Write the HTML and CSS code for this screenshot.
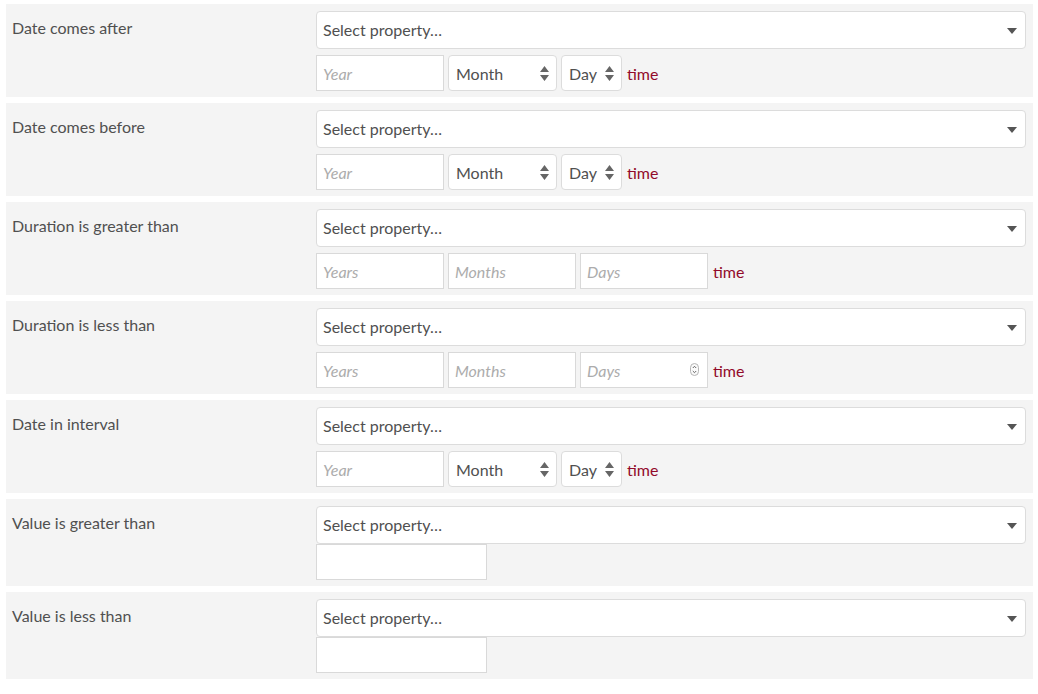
FILE: index.html
```html
<!DOCTYPE html>
<html>
<head>
<meta charset="utf-8">
<link rel="stylesheet" href="styles.css">
</head>
<body>
<div class="list">

  <div class="panel">
    <div class="label">Date comes after</div>
    <div class="fields">
      <div class="select"><span>Select property…</span><svg class="caret" width="10" height="6" viewBox="0 0 10 6"><path d="M0 0H10L5 6Z"/></svg></div>
      <div class="row">
        <input class="input w128" placeholder="Year">
        <div class="mini w109"><span>Month</span><svg class="updown" width="9" height="15" viewBox="0 0 9 15"><path d="M4.5 0L9 6H0Z M0 9H9L4.5 15Z"/></svg></div>
        <div class="mini w61"><span>Day</span><svg class="updown" width="9" height="15" viewBox="0 0 9 15"><path d="M4.5 0L9 6H0Z M0 9H9L4.5 15Z"/></svg></div>
        <span class="time">time</span>
      </div>
    </div>
  </div>

  <div class="panel">
    <div class="label">Date comes before</div>
    <div class="fields">
      <div class="select"><span>Select property…</span><svg class="caret" width="10" height="6" viewBox="0 0 10 6"><path d="M0 0H10L5 6Z"/></svg></div>
      <div class="row">
        <input class="input w128" placeholder="Year">
        <div class="mini w109"><span>Month</span><svg class="updown" width="9" height="15" viewBox="0 0 9 15"><path d="M4.5 0L9 6H0Z M0 9H9L4.5 15Z"/></svg></div>
        <div class="mini w61"><span>Day</span><svg class="updown" width="9" height="15" viewBox="0 0 9 15"><path d="M4.5 0L9 6H0Z M0 9H9L4.5 15Z"/></svg></div>
        <span class="time">time</span>
      </div>
    </div>
  </div>

  <div class="panel">
    <div class="label">Duration is greater than</div>
    <div class="fields">
      <div class="select"><span>Select property…</span><svg class="caret" width="10" height="6" viewBox="0 0 10 6"><path d="M0 0H10L5 6Z"/></svg></div>
      <div class="row">
        <input class="input w128" placeholder="Years">
        <input class="input w128" placeholder="Months">
        <input class="input w128" placeholder="Days">
        <span class="time">time</span>
      </div>
    </div>
  </div>

  <div class="panel">
    <div class="label">Duration is less than</div>
    <div class="fields">
      <div class="select"><span>Select property…</span><svg class="caret" width="10" height="6" viewBox="0 0 10 6"><path d="M0 0H10L5 6Z"/></svg></div>
      <div class="row">
        <input class="input w128" placeholder="Years">
        <input class="input w128" placeholder="Months">
        <div class="spin-wrap">
          <input class="input w128" placeholder="Days">
          <svg class="spinner" width="9" height="13" viewBox="0 0 9 13"><rect x="0.5" y="0.5" width="8" height="12" rx="4" fill="#fafafa" stroke="#b5b5b5"/><path d="M2.8 5L4.5 3.3L6.2 5M2.8 8L4.5 9.7L6.2 8" fill="none" stroke="#555" stroke-width="0.9"/></svg>
        </div>
        <span class="time">time</span>
      </div>
    </div>
  </div>

  <div class="panel">
    <div class="label">Date in interval</div>
    <div class="fields">
      <div class="select"><span>Select property…</span><svg class="caret" width="10" height="6" viewBox="0 0 10 6"><path d="M0 0H10L5 6Z"/></svg></div>
      <div class="row">
        <input class="input w128" placeholder="Year">
        <div class="mini w109"><span>Month</span><svg class="updown" width="9" height="15" viewBox="0 0 9 15"><path d="M4.5 0L9 6H0Z M0 9H9L4.5 15Z"/></svg></div>
        <div class="mini w61"><span>Day</span><svg class="updown" width="9" height="15" viewBox="0 0 9 15"><path d="M4.5 0L9 6H0Z M0 9H9L4.5 15Z"/></svg></div>
        <span class="time">time</span>
      </div>
    </div>
  </div>

  <div class="panel">
    <div class="label">Value is greater than</div>
    <div class="fields">
      <div class="select"><span>Select property…</span><svg class="caret" width="10" height="6" viewBox="0 0 10 6"><path d="M0 0H10L5 6Z"/></svg></div>
      <div class="row tight">
        <input class="input w171">
      </div>
    </div>
  </div>

  <div class="panel">
    <div class="label">Value is less than</div>
    <div class="fields">
      <div class="select"><span>Select property…</span><svg class="caret" width="10" height="6" viewBox="0 0 10 6"><path d="M0 0H10L5 6Z"/></svg></div>
      <div class="row tight">
        <input class="input w171">
      </div>
    </div>
  </div>

</div>
</body>
</html>
```

FILE: styles.css
```css
html, body {
  background: #ffffff;
}
body {
  margin: 4px 5px 0 6px;
  font-family: Lato, "Open Sans", sans-serif;
  color: #555555;
}
.list {
  display: flex;
  flex-direction: column;
  gap: 6px;
}
.panel {
  display: flex;
  background: #f4f4f4;
  padding: 7px 7px 6px 6px;
}
.label {
  width: 304px;
  flex: none;
  margin-top: 7px;
  font-size: 16px;
  line-height: 20px;
  color: #505050;
}
.fields {
  flex: 1;
  display: flex;
  flex-direction: column;
  gap: 6px;
}
.select {
  box-sizing: border-box;
  height: 38px;
  border: 1px solid #dcdcdc;
  border-radius: 4px;
  background: #ffffff;
  display: flex;
  align-items: center;
  justify-content: space-between;
  padding: 0 8px 2px 6px;
  font-size: 16px;
  color: #505050;
}
.caret {
  fill: #555555;
  margin-top: 3px;
}
.row {
  display: flex;
  align-items: center;
  gap: 4px;
  height: 36px;
}
.fields .row.tight {
  margin-top: -6px;
}
.input {
  box-sizing: border-box;
  height: 36px;
  border: 1px solid #d9d9d9;
  border-radius: 0;
  background: #ffffff;
  margin: 0;
  padding: 0 6px;
  font-family: Lato, "Open Sans", sans-serif;
  font-size: 16px;
  color: #555555;
  outline: none;
}
.input::placeholder {
  color: #acacac;
  font-style: italic;
}
.w128 { width: 128px; }
.w171 { width: 171px; }
.w109 { width: 109px; }
.w61 { width: 61px; }
.mini {
  box-sizing: border-box;
  height: 36px;
  border: 1px solid #dcdcdc;
  border-radius: 4px;
  background: #ffffff;
  display: flex;
  align-items: center;
  justify-content: space-between;
  padding: 0 7px 0 7px;
  font-size: 16px;
  color: #505050;
}
.updown {
  fill: #666666;
  flex: none;
}
.spin-wrap {
  position: relative;
  display: flex;
}
.spinner {
  position: absolute;
  right: 9px;
  top: 11px;
}
.time {
  color: #920a2a;
  font-size: 16px;
  margin-left: 1px;
}
```
